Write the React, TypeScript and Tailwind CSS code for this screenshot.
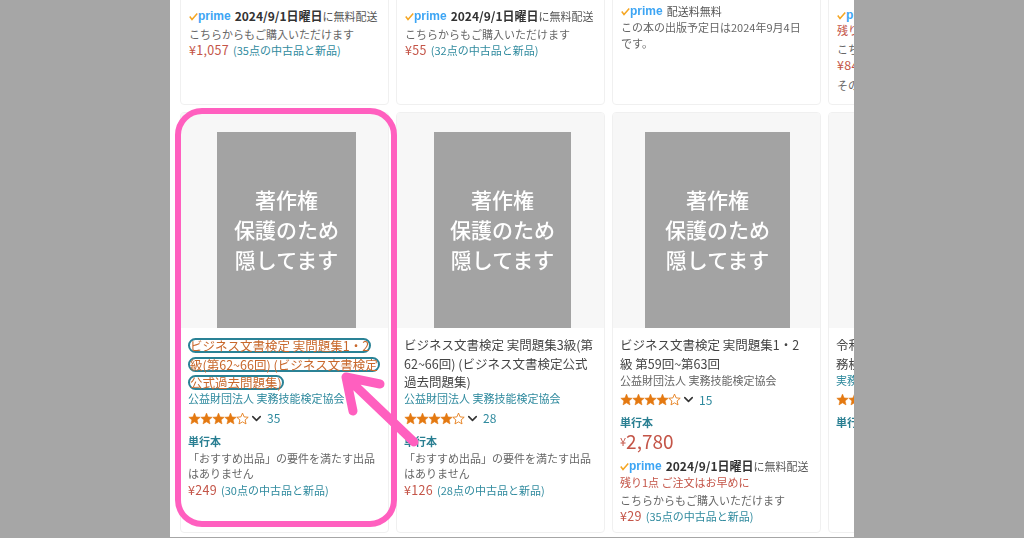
import { ChevronDown } from "lucide-react";

const jp = "font-['Noto_Sans_CJK_JP',sans-serif]";

function StarRow({ count }: { count: string }) {
  return (
    <div className="flex items-center h-[19px]">
      {[0, 1, 2, 3, 4].map((i) => (
        <svg key={i} viewBox="0 0 24 24" className="w-[13px] h-[13px] -mr-px">
          <path
            d="M12 2l3 7 7.500 .7-5.700 5 1.700 7.300L12 18.200 5.500 22l1.700-7.300-5.700-5L9 9z"
            fill={i < 4 ? "#e47911" : "#fff"}
            stroke="#e47911"
            strokeWidth={i < 4 ? 1 : 1.6}
          />
        </svg>
      ))}
      <ChevronDown className="w-[15px] h-[15px] ml-[1px] text-[#333]" strokeWidth={2.5} />
      <span className="ml-[3px] text-[12px] text-[#2f8a9e]">{count}</span>
    </div>
  );
}

function Prime({ children }: { children: React.ReactNode }) {
  return (
    <div className="flex items-center h-[16px] text-[11px] text-[#555] whitespace-nowrap">
      <svg viewBox="0 0 12 12" className="w-[9px] h-[9px] mt-px">
        <path d="M1 6l3 4 7-8" fill="none" stroke="#f5a623" strokeWidth="2" />
      </svg>
      <span className="font-['Liberation_Sans',sans-serif] text-[12px] font-bold text-[#3da5f4] mr-[4px] leading-none">prime</span>
      {children}
    </div>
  );
}

function Used({ price, note }: { price: string; note: string }) {
  return (
    <div className="h-[16px] leading-[16px] text-[11px] text-[#2f8a9e] whitespace-nowrap">
      <span className="text-[12.500px] tracking-[0.3px] text-[#c45548] mr-[4px]">¥{price}</span>
      {note && `(${note})`}
    </div>
  );
}

function Line({ children }: { children: React.ReactNode }) {
  return <div className="h-[16px] leading-[16px] text-[11px] text-[#666] whitespace-nowrap">{children}</div>;
}

function Cover({ inset }: { inset: string }) {
  return (
    <div className={`h-[215px] bg-[#f7f7f7] flex items-end ${inset}`}>
      <div className="h-[196px] w-full bg-[#a3a3a3] flex items-center justify-center text-center text-white text-[21px] leading-[30px] font-medium">
        <div className="-mt-[2px]">
          著作権
          <br />
          保護のため
          <br />
          隠してます
        </div>
      </div>
    </div>
  );
}

function Binding() {
  return <div className="mt-[4px] h-[18px] leading-[18px] text-[11px] font-bold text-[#2a7f92]">単行本</div>;
}

function NotFeatured() {
  return (
    <div className="text-[11px] leading-[15.500px] text-[#666] mt-[1px] whitespace-nowrap">
      「おすすめ出品」の要件を満たす出品
      <br />
      はありません
    </div>
  );
}

function Date() {
  return <b className="text-[#333] text-[12px]">2024/9/1日曜日</b>;
}

const topCard = "w-[209px] shrink-0 h-[113px] px-[8px] bg-white border border-[#f0f0f0] rounded-[4px] overflow-hidden";
const bottomCard = "w-[209px] shrink-0 h-[421px] bg-white border border-[#f0f0f0] rounded-[4px] overflow-hidden";
const highlight = "h-[15px] leading-[11px] border-2 border-[#2a8296] rounded-full mb-[3.500px] whitespace-nowrap";

export default function App() {
  return (
    <div className={`h-[538px] bg-[#a6a6a6] flex justify-center items-start ${jp}`}>
      <div className="relative w-[684px] h-[537px] bg-white overflow-hidden">
        <div className="blur-[0.5px]">
          <div className="-mt-[8px] pl-[10px] flex gap-[7px]">
            <div className={`${topCard} pt-[15px]`}>
              <Prime>
                <Date />に無料配送
              </Prime>
              <div className="mt-[2px]">
                <Line>こちらからもご購入いただけます</Line>
              </div>
              <Used price="1,057" note="35点の中古品と新品" />
            </div>
            <div className={`${topCard} pt-[15px]`}>
              <Prime>
                <Date />に無料配送
              </Prime>
              <div className="mt-[2px]">
                <Line>こちらからもご購入いただけます</Line>
              </div>
              <Used price="55" note="32点の中古品と新品" />
            </div>
            <div className={`${topCard} pt-[10px]`}>
              <Prime>配送料無料</Prime>
              <Line>この本の出版予定日は2024年9月4日</Line>
              <Line>です。</Line>
            </div>
            <div className={`${topCard} pt-[14px]`}>
              <Prime>
                <Date />
              </Prime>
              <div className="h-[15px] leading-[15px] text-[11px] text-[#c45548]">残り1点</div>
              <div className="mt-[3px]">
                <Line>こちらからも</Line>
              </div>
              <Used price="849" note="" />
              <div className="mt-[4px]">
                <Line>その他</Line>
              </div>
            </div>
          </div>

          <div className="mt-[7px] pl-[10px] flex gap-[7px]">
            <div className={bottomCard}>
              <Cover inset="pl-[36px] pr-[32px]" />
              <div className="px-[7px] pt-[10px]">
                <div className="flex flex-col items-start text-[12.500px] text-[#c8682c]">
                  <span className={highlight}>ビジネス文書検定 実問題集1・2</span>
                  <span className={highlight}>級(第62~66回) (ビジネス文書検定</span>
                  <span className={highlight}>公式過去問題集)</span>
                </div>
                <div className="text-[11px] leading-[16px] text-[#2f8a9e] -mt-[4px] whitespace-nowrap">公益財団法人 実務技能検定協会</div>
                <div className="mt-[3px]">
                  <StarRow count="35" />
                </div>
                <Binding />
                <NotFeatured />
                <Used price="249" note="30点の中古品と新品" />
              </div>
            </div>

            <div className={bottomCard}>
              <Cover inset="pl-[37px] pr-[33px]" />
              <div className="px-[7px] pt-[8px]">
                <div className="text-[12.500px] leading-[18.500px] text-[#444] whitespace-nowrap">
                  ビジネス文書検定 実問題集3級(第
                  <br />
                  62~66回) (ビジネス文書検定公式
                  <br />
                  過去問題集)
                </div>
                <div className="text-[11px] leading-[16px] text-[#2f8a9e] -mt-[2px] whitespace-nowrap">公益財団法人 実務技能検定協会</div>
                <div className="mt-[3px]">
                  <StarRow count="28" />
                </div>
                <Binding />
                <NotFeatured />
                <Used price="126" note="28点の中古品と新品" />
              </div>
            </div>

            <div className={bottomCard}>
              <Cover inset="pl-[32px] pr-[30px]" />
              <div className="px-[7px] pt-[8px]">
                <div className="text-[12.500px] leading-[18.500px] text-[#444] whitespace-nowrap">
                  ビジネス文書検定 実問題集1・2
                  <br />
                  級 第59回~第63回
                </div>
                <div className="text-[11px] leading-[16px] text-[#666] -mt-[1px] whitespace-nowrap">公益財団法人 実務技能検定協会</div>
                <div className="mt-[2px]">
                  <StarRow count="15" />
                </div>
                <Binding />
                <div className="h-[20px] leading-[20px] text-[#c45548] text-[19px]">
                  <span className="text-[11px] align-[3px]">¥</span>2,780
                </div>
                <div className="mt-[7px]">
                  <Prime>
                    <Date />に無料配送
                  </Prime>
                </div>
                <div className="h-[16px] leading-[16px] text-[11px] text-[#c45548]">残り1点 ご注文はお早めに</div>
                <div className="mt-[2px]">
                  <Line>こちらからもご購入いただけます</Line>
                </div>
                <Used price="29" note="35点の中古品と新品" />
              </div>
            </div>

            <div className={bottomCard}>
              <Cover inset="pl-[32px] pr-[30px]" />
              <div className="px-[7px] pt-[8px]">
                <div className="text-[12.500px] leading-[18.500px] text-[#444]">
                  令和6年度
                  <br />
                  務検定
                </div>
                <div className="text-[11px] leading-[16px] text-[#2f8a9e] -mt-[1px] whitespace-nowrap">実務技能検定協会</div>
                <div className="mt-[2px]">
                  <StarRow count="12" />
                </div>
                <Binding />
              </div>
            </div>
          </div>
        </div>

        {/* callout drawn over the screenshot */}
        <div className="absolute left-[5px] top-[108px] w-[222px] h-[419px] border-[6px] border-[#ff5fbf] rounded-[27px]" />
        <svg className="absolute left-0 top-0 w-[684px] h-[537px] pointer-events-none" viewBox="0 0 684 537">
          <path
            d="M244 442L176 377M210 384L176 377L183 411"
            fill="none"
            stroke="#ff5fbf"
            strokeWidth="9"
            strokeLinecap="round"
            strokeLinejoin="round"
          />
        </svg>
      </div>
    </div>
  );
}
